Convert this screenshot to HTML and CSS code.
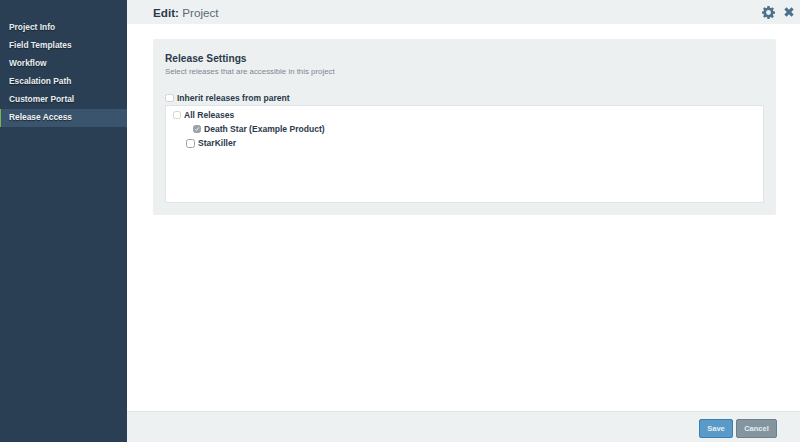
FILE: index.html
```html
<!DOCTYPE html>
<html lang="en">
<head>
<meta charset="utf-8">
<title>Edit: Project</title>
<link rel="stylesheet" href="styles.css">
</head>
<body>
<div class="app">
  <nav class="sidebar">
    <a class="nav-item">Project Info</a>
    <a class="nav-item">Field Templates</a>
    <a class="nav-item">Workflow</a>
    <a class="nav-item">Escalation Path</a>
    <a class="nav-item">Customer Portal</a>
    <a class="nav-item active">Release Access</a>
  </nav>
  <main class="main">
    <header class="topbar">
      <h1 class="title"><b>Edit:</b> Project</h1>
      <div class="tools">
        <svg class="gear" viewBox="0 0 24 24" width="13" height="13"><path fill="#4d7189" fill-rule="evenodd" d="M10 0h4l.6 3.200 2 .8L19.300 2.200l2.800 2.800L20.100 7.600l.8 2L24 10.200v3.800l-3.100.6-.8 2 1.800 2.600-2.800 2.800-2.700-1.800-2 .8L14 24h-4l-.6-3.200-2-.8-2.700 1.800-2.800-2.800L3.700 16.600l-.8-2L0 14v-3.800l2.900-.6.8-2L1.900 5l2.800-2.800L7.400 4l2-.8zM12 7.500a4.500 4.500 0 1 0 0 9 4.500 4.500 0 0 0 0-9z"/></svg>
        <svg class="close" viewBox="0 0 12 12" width="10" height="10"><path fill="#4d7189" d="M3 .4 6 3.400 9 .4 11.600 3 8.600 6l3 3L9 11.600l-3-3-3 3L.4 9l3-3-3-3z"/></svg>
      </div>
    </header>
    <section class="content">
      <div class="panel">
        <h2 class="panel-title">Release Settings</h2>
        <p class="panel-sub">Select releases that are accessible in this project</p>
        <label class="row inherit"><span class="check"></span>Inherit releases from parent</label>
        <div class="tree">
          <label class="row"><span class="check"></span>All Releases</label>
          <label class="row level2"><span class="check checked"><svg viewBox="0 0 10 10" width="8" height="8"><path d="M2 5.200 4.200 7.400 8 2.400" fill="none" stroke="#fff" stroke-width="1.400"/></svg></span>Death Star (Example Product)</label>
          <label class="row level1"><span class="check dark"></span>StarKiller</label>
        </div>
      </div>
    </section>
    <footer class="footer">
      <button class="btn save">Save</button>
      <button class="btn cancel">Cancel</button>
    </footer>
  </main>
</div>
</body>
</html>
```
FILE: styles.css
```css
* { box-sizing: border-box; }
html, body { margin: 0; height: 100%; }
body { font-family: "Liberation Sans", Arial, sans-serif; color: #2b3a4a; background: #fff; }
.app { display: flex; height: 442px; width: 800px; overflow: hidden; }
.sidebar { width: 127px; flex: none; background: #2a3f54; padding-top: 19px; display: flex; flex-direction: column; }
.nav-item { height: 18px; line-height: 17px; padding-left: 9px; font-size: 8.400px; font-weight: 700; color: #e9edf0; text-shadow: 0 1px 1px #16222e; }
.nav-item.active { background: #3a546d; border-left: 1px solid #7ab547; padding-left: 8px; color: #f4f6f7; }
.main { flex: 1; display: flex; flex-direction: column; min-width: 0; }
.topbar { height: 24px; flex: none; background: #eef1f2; display: flex; align-items: center; justify-content: space-between; padding: 0 6px 0 26px; }
.title { margin: 0; font-size: 11.700px; font-weight: 400; color: #5b6975; }
.title b { color: #2b3a4a; font-weight: 700; }
.tools { display: flex; align-items: center; gap: 9px; }
.gear, .close { display: block; }
.content { flex: 1; padding: 15px 24px 0 26px; }
.panel { background: #edf0f1; height: 176px; border-radius: 2px; padding: 14px 12px 0; }
.panel-title { margin: 0; font-size: 10.200px; line-height: 12px; font-weight: 700; color: #2b3a4a; }
.panel-sub { margin: 2px 0 0; font-size: 7.850px; line-height: 10px; color: #7d8790; }
.row { display: flex; align-items: center; font-size: 8.550px; font-weight: 700; height: 14px; color: #2b3a4a; }
.inherit { margin-top: 14px; height: 14px; }
.inherit .check { width: 8.500px; height: 8.500px; margin-right: 3.500px; }
.tree { background: #fff; border: 1px solid #dfe4e6; height: 98px; padding-top: 2px; padding-left: 7px; }
.check { width: 8px; height: 8px; flex: none; background: #fff; border: 1px solid #cfd4d8; border-radius: 2.500px; margin-right: 3px; display: flex; align-items: center; justify-content: center; }
.check.checked { background: #9aa3aa; border-color: #9aa3aa; }
.check.dark { width: 9px; height: 9px; border-color: #9aa1a7; }
.level1 { padding-left: 13px; }
.level2 { padding-left: 20px; }
.footer { height: 31px; flex: none; background: #eef1f2; border-top: 1px solid #e1e5e7; display: flex; justify-content: flex-end; align-items: center; gap: 3px; padding: 2px 23px 0 0; }
.btn { height: 19px; border-radius: 2px; font: 700 7.500px "Liberation Sans", Arial, sans-serif; color: #e8eef2; padding: 0; }
.save { width: 34px; background: #5a9ac9; border: 1px solid #3a7fb0; }
.cancel { width: 41px; background: #83959f; border: 1px solid #6d7f89; }
```
